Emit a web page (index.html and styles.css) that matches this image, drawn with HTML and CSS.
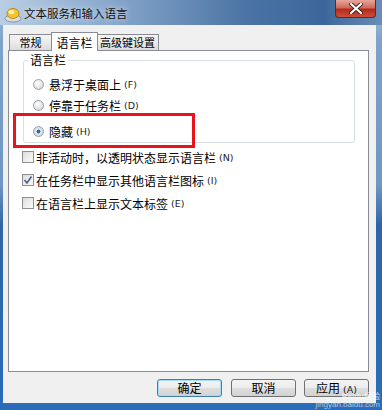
FILE: index.html
```html
<!DOCTYPE html>
<html lang="zh-CN">
<head>
  <meta charset="UTF-8">
  <title>文本服务和输入语言</title>
  <link rel="stylesheet" href="styles.css">
</head>
<body>
  <div class="window">
    <div class="titlebar">
      <svg class="app-icon" width="18" height="16" viewBox="0 0 18 16">
        <ellipse cx="9" cy="11.5" rx="8" ry="3.5" fill="#d8dde4" stroke="#8a96a4" stroke-width="1"/>
        <ellipse cx="9" cy="6.5" rx="6" ry="5" fill="#f4c430" stroke="#c28a10" stroke-width="1"/>
        <ellipse cx="7.5" cy="5" rx="3" ry="2" fill="#fff3b0"/>
      </svg>
      <span class="title">文本服务和输入语言</span>
      <div class="close-btn">
        <svg width="14" height="11" viewBox="0 0 14 11">
          <path d="M2 1 L12 10 M12 1 L2 10" stroke="#3a2020" stroke-width="4" stroke-linecap="round"/>
          <path d="M2 1 L12 10 M12 1 L2 10" stroke="#ffffff" stroke-width="2.2" stroke-linecap="round"/>
        </svg>
      </div>
    </div>

    <div class="client">
      <div class="tabs">
        <div class="tab">常规</div>
        <div class="tab active">语言栏</div>
        <div class="tab">高级键设置</div>
      </div>

      <div class="panel">
        <fieldset class="group">
          <legend>语言栏</legend>
          <div class="option row-1">
            <span class="radio"></span>
            <span>悬浮于桌面上</span><span class="key">(F)</span>
          </div>
          <div class="option row-2">
            <span class="radio"></span>
            <span>停靠于任务栏</span><span class="key">(D)</span>
          </div>
          <div class="option row-3">
            <span class="radio checked"></span>
            <span>隐藏</span><span class="key">(H)</span>
          </div>
        </fieldset>

        <div class="check row-a">
          <span class="box"></span>
          <span>非活动时，以透明状态显示语言栏</span><span class="key">(N)</span>
        </div>
        <div class="check row-b">
          <span class="box checked">
            <svg width="10" height="10" viewBox="0 0 10 10">
              <path d="M1.5 5 L4 8 L8.5 1.5" fill="none" stroke="#4a5f8a" stroke-width="1.6"/>
            </svg>
          </span>
          <span>在任务栏中显示其他语言栏图标</span><span class="key">(I)</span>
        </div>
        <div class="check row-c">
          <span class="box"></span>
          <span>在语言栏上显示文本标签</span><span class="key">(E)</span>
        </div>
      </div>

      <div class="buttons">
        <div class="btn default">确定</div>
        <div class="btn">取消</div>
        <div class="btn">应用<span class="key">(A)</span></div>
      </div>
    </div>

    <div class="highlight"></div>
    <div class="watermark">
      <span class="wm-logo">Baidu经验</span>
      <span class="wm-url">jingyan.baidu.com</span>
    </div>
  </div>
</body>
</html>
```

FILE: styles.css
```css
html, body {
  margin: 0;
  padding: 0;
}
body {
  font-family: 'Noto Sans CJK SC', 'Noto Sans', sans-serif;
  font-size: 12px;
  color: #000;
  background: #fff;
}
.window {
  position: relative;
  width: 382px;
  height: 410px;
  box-sizing: border-box;
  padding: 0 6px 7px 3px;
  display: flex;
  flex-direction: column;
  background: linear-gradient(180deg, #a7c0db 0%, #7ea2c9 10%, #6f97c3 45%, #2f65a6 55%, #2a6cb8 100%);
  overflow: hidden;
}
.titlebar {
  height: 25px;
  margin: 0 -6px 0 -3px;
  padding-left: 4px;
  display: flex;
  align-items: flex-start;
  background: linear-gradient(90deg, #b9cee4 0%, #8eadd0 25%, #4a73a3 65%, #3d679c 85%, #6a8db8 100%);
}
.app-icon {
  margin-top: 7px;
}
.title {
  margin-top: 5px;
  margin-left: 2px;
  font-size: 11.5px;
  color: #111;
  text-shadow: 0 0 6px rgba(255, 255, 255, 0.9);
}
.close-btn {
  margin-left: auto;
  margin-right: 6px;
  width: 41px;
  height: 18px;
  box-sizing: border-box;
  border: 1px solid #5a2a28;
  border-top: none;
  border-radius: 0 0 4px 4px;
  background: linear-gradient(180deg, #e6a79c 0%, #cf6b5c 45%, #b8291a 55%, #c8503e 100%);
  display: flex;
  align-items: center;
  justify-content: center;
}
.client {
  flex: 1;
  background: #f0f0f0;
  padding: 7px 7px 0 5px;
  display: flex;
  flex-direction: column;
}
.tabs {
  display: flex;
  align-items: flex-end;
  height: 18px;
  margin-left: 1px;
}
.tab {
  height: 16px;
  box-sizing: border-box;
  padding: 0;
  font-size: 11px;
  line-height: 15px;
  text-align: center;
  white-space: nowrap;
  border: 1px solid #898c95;
  border-bottom: none;
  background: linear-gradient(180deg, #f3f3f3 0%, #ebebeb 50%, #dcdcdc 100%);
}
.tab:first-child {
  width: 43px;
}
.tab.active {
  position: relative;
  z-index: 1;
  height: 19px;
  margin-bottom: -1px;
  margin-left: -1px;
  margin-right: -1px;
  padding-top: 2px;
  width: 47px;
  font-size: 12px;
  background: #fff;
}
.tab:last-child {
  width: 62px;
  border-left: none;
}
.panel {
  height: 322px;
  box-sizing: border-box;
  border: 1px solid #898c95;
  background: #fff;
}
.group {
  margin: 2px 13px 0 14px;
  padding: 0 0 3px 0;
  border: 1px solid #d5dfe5;
  border-radius: 3px;
}
.group legend {
  margin-left: 4px;
  padding: 0 2px;
  line-height: 14px;
}
.option, .check {
  height: 16px;
  display: flex;
  align-items: center;
  white-space: nowrap;
}
.option {
  margin-left: 9px;
}
.row-1 { margin-top: 9px; }
.row-2 { margin-top: 5px; }
.row-3 { margin-top: 10px; }
.radio {
  width: 11px;
  height: 11px;
  margin-right: 5px;
  border-radius: 50%;
  box-sizing: border-box;
  border: 1px solid #9aa0a8;
  background: radial-gradient(circle at 40% 35%, #ffffff 0%, #e6e6e6 55%, #c9c9c9 100%);
}
.radio.checked {
  background: radial-gradient(circle at 50% 50%, #2a79c6 0%, #1e62a8 28%, #e2e6ea 34%, #d0d4d8 100%);
}
.key {
  margin-left: 3px;
  font-size: 9.5px;
  font-family: 'DejaVu Sans', sans-serif;
  color: #222;
}
.check {
  margin-left: 13px;
}
.row-a { margin-top: 6px; }
.row-b { margin-top: 7px; }
.row-c { margin-top: 7px; }
.box {
  width: 12px;
  height: 12px;
  margin-right: 2px;
  box-sizing: border-box;
  border: 1px solid #8f8f8f;
  background: linear-gradient(135deg, #dcdcdc 0%, #efefef 60%, #fafafa 100%);
  display: flex;
  align-items: center;
  justify-content: center;
}
.buttons {
  display: flex;
  justify-content: flex-end;
  gap: 8px;
  margin-top: 7px;
}
.btn {
  width: 65px;
  height: 18px;
  box-sizing: border-box;
  border: 1px solid #707070;
  border-radius: 3px;
  background: linear-gradient(180deg, #f4f4f4 0%, #ececec 48%, #dedede 52%, #d2d2d2 100%);
  text-align: center;
  line-height: 16px;
}
.btn.default {
  border-color: #3c7fb1;
  box-shadow: inset 0 0 0 1px #a6dcf5;
  margin-right: 1px;
}
.highlight {
  position: absolute;
  left: 13px;
  top: 113px;
  width: 182px;
  height: 35px;
  box-sizing: border-box;
  border: 3px solid #e8141c;
}
.watermark {
  position: absolute;
  left: 296px;
  top: 393px;
  display: flex;
  flex-direction: column;
  align-items: flex-end;
  width: 84px;
  color: rgba(255, 255, 255, 0.6);
  font-family: 'Liberation Sans', 'Noto Sans CJK SC', sans-serif;
}
.wm-logo {
  font-size: 8px;
  font-weight: bold;
  line-height: 8px;
}
.wm-url {
  font-size: 8px;
  line-height: 8px;
  color: rgba(215, 228, 242, 0.75);
}
```
